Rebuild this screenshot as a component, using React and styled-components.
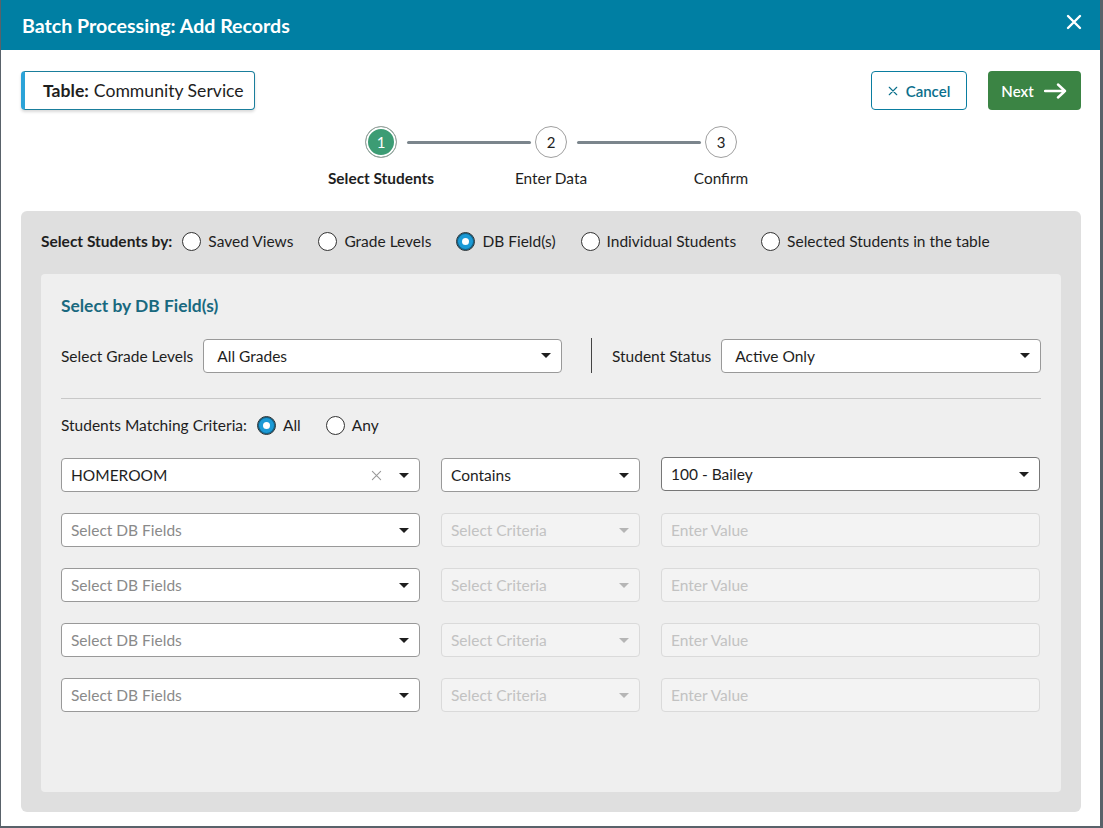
import styled, { createGlobalStyle } from "styled-components";

const GlobalStyle = createGlobalStyle`
  html, body {
    margin: 0;
    padding: 0;
    background: #59626a;
  }
  body {
    font-family: Lato, "Liberation Sans", sans-serif;
    color: #1e1e1e;
  }
  * { box-sizing: border-box; }
`;

const CloseIcon = ({ size = 16, stroke = 2.4 }) => (
  <svg width={size} height={size} viewBox="0 0 16 16" fill="none">
    <path d="M2 2 L14 14 M14 2 L2 14" stroke="currentColor" strokeWidth={stroke} strokeLinecap="round" />
  </svg>
);

const ArrowIcon = () => (
  <svg width="24" height="16" viewBox="0 0 24 16" fill="none">
    <path d="M1 8 H21 M14 1.5 L21 8 L14 14.5" stroke="currentColor" strokeWidth="2.4" strokeLinecap="round" strokeLinejoin="round" />
  </svg>
);

const App = () => {
  const studentOptions = [
    { label: "Saved Views" },
    { label: "Grade Levels" },
    { label: "DB Field(s)", checked: true },
    { label: "Individual Students" },
    { label: "Selected Students in the table" },
  ];
  const emptyRows = [1, 2, 3, 4];

  return (
    <>
      <GlobalStyle />
      <Dialog>
        <Header>
          <Title>Batch Processing: Add Records</Title>
          <HeaderClose>
            <CloseIcon size={16} stroke={2.4} />
          </HeaderClose>
        </Header>
        <Body>
          <TopRow>
            <TableTag>
              <b>Table:</b> Community Service
            </TableTag>
            <Actions>
              <CancelButton>
                <CloseIcon size={10} stroke={1.8} />
                Cancel
              </CancelButton>
              <NextButton>
                Next
                <ArrowIcon />
              </NextButton>
            </Actions>
          </TopRow>

          <Stepper>
            <Step>
              <StepCircle $active>1</StepCircle>
              <StepLabel $active>Select Students</StepLabel>
            </Step>
            <Step>
              <StepCircle>2</StepCircle>
              <StepLabel>Enter Data</StepLabel>
            </Step>
            <Step $last>
              <StepCircle>3</StepCircle>
              <StepLabel>Confirm</StepLabel>
            </Step>
          </Stepper>

          <OuterPanel>
            <RadioRow>
              <BoldLabel>Select Students by:</BoldLabel>
              {studentOptions.map((o) => (
                <RadioItem key={o.label}>
                  <Radio $checked={o.checked} />
                  {o.label}
                </RadioItem>
              ))}
            </RadioRow>

            <InnerPanel>
              <SectionTitle>Select by DB Field(s)</SectionTitle>
              <FilterRow>
                <FieldLabel>Select Grade Levels</FieldLabel>
                <Select $width={359}>
                  <span>All Grades</span>
                  <Caret />
                </Select>
                <Divider />
                <FieldLabel>Student Status</FieldLabel>
                <Select $width={320}>
                  <span>Active Only</span>
                  <Caret />
                </Select>
              </FilterRow>
              <Rule />
              <MatchRow>
                <FieldLabel>Students Matching Criteria:</FieldLabel>
                <RadioItem>
                  <Radio $checked />
                  All
                </RadioItem>
                <RadioItem>
                  <Radio />
                  Any
                </RadioItem>
              </MatchRow>

              <CriteriaGrid>
                <Select>
                  <span>HOMEROOM</span>
                  <SelectIcons>
                    <ClearMark>
                      <CloseIcon size={11} stroke={1.6} />
                    </ClearMark>
                    <Caret />
                  </SelectIcons>
                </Select>
                <Select>
                  <span>Contains</span>
                  <Caret />
                </Select>
                <Select $raised>
                  <span>100 - Bailey</span>
                  <Caret />
                </Select>

                {emptyRows.map((r) => (
                  <Row key={r}>
                    <Select $placeholder>
                      <span>Select DB Fields</span>
                      <Caret />
                    </Select>
                    <Select $disabled>
                      <span>Select Criteria</span>
                      <Caret $disabled />
                    </Select>
                    <Select $disabled>
                      <span>Enter Value</span>
                    </Select>
                  </Row>
                ))}
              </CriteriaGrid>
            </InnerPanel>
          </OuterPanel>
        </Body>
      </Dialog>
    </>
  );
};

export default App;

const Dialog = styled.div`
  width: 1099px;
  height: 826px;
  margin-left: 1px;
  background: #fff;
  display: flex;
  flex-direction: column;
`;

const Header = styled.div`
  height: 50px;
  background: #007fa3;
  color: #fff;
  display: flex;
  align-items: center;
  justify-content: space-between;
  padding: 0 18px 0 21px;
`;

const Title = styled.h1`
  margin: 0;
  font-size: 19.6px;
  font-weight: 700;
`;

const HeaderClose = styled.div`
  display: flex;
  color: #fff;
  margin-top: -6px;
`;

const Body = styled.div`
  padding: 21px 19px 0 20px;
`;

const TopRow = styled.div`
  display: flex;
  justify-content: space-between;
  align-items: center;
`;

const TableTag = styled.div`
  height: 39px;
  display: flex;
  align-items: center;
  gap: 5px;
  padding: 0 10px 0 18px;
  border: 1px solid #1a7e9c;
  border-left: 4px solid #2ba3d8;
  border-radius: 4px;
  font-size: 17.6px;
  box-shadow: 0 2px 3px rgba(0, 0, 0, 0.15);
  b { font-weight: 700; }
`;

const Actions = styled.div`
  display: flex;
  gap: 21px;
`;

const CancelButton = styled.button`
  height: 39px;
  width: 96px;
  display: flex;
  align-items: center;
  justify-content: center;
  gap: 8px;
  background: #fff;
  color: #0a6f8c;
  border: 1px solid #0a7da0;
  border-radius: 4px;
  font-family: inherit;
  font-size: 15px;
  font-weight: 600;
`;

const NextButton = styled.button`
  height: 39px;
  width: 93px;
  display: flex;
  align-items: center;
  justify-content: center;
  gap: 10px;
  background: #3b8444;
  color: #fff;
  border: none;
  border-radius: 4px;
  font-family: inherit;
  font-size: 15px;
  font-weight: 600;
  padding-left: 6px;
`;

const Stepper = styled.div`
  display: flex;
  justify-content: center;
  margin-top: 16px;
`;

const Step = styled.div`
  position: relative;
  width: 170px;
  display: flex;
  flex-direction: column;
  align-items: center;
  &::after {
    content: "";
    display: ${(p) => (p.$last ? "none" : "block")};
    position: absolute;
    top: 15px;
    left: calc(50% + 26px);
    width: 124px;
    height: 3px;
    background: #7b858c;
    border-radius: 2px;
  }
`;

const StepCircle = styled.div`
  width: 32px;
  height: 32px;
  border-radius: 50%;
  border: 1px solid #a0a0a0;
  display: flex;
  align-items: center;
  justify-content: center;
  font-size: 15px;
  background: ${(p) => (p.$active ? "#3c9c74" : "#fff")};
  color: ${(p) => (p.$active ? "#fff" : "#222")};
  box-shadow: ${(p) => (p.$active ? "inset 0 0 0 2px #fff" : "none")};
`;

const StepLabel = styled.div`
  margin-top: 11px;
  font-size: 15.4px;
  font-weight: ${(p) => (p.$active ? 700 : 400)};
`;

const OuterPanel = styled.div`
  margin-top: 24px;
  height: 601px;
  background: #dfdfdf;
  border-radius: 6px;
  padding: 19px 20px 20px;
`;

const RadioRow = styled.div`
  display: flex;
  align-items: center;
  height: 22px;
  font-size: 15.5px;
  white-space: nowrap;
`;

const BoldLabel = styled.span`
  font-weight: 700;
  margin-right: 10px;
`;

const RadioItem = styled.label`
  display: inline-flex;
  align-items: center;
  gap: 7px;
  margin-right: 25px;
  font-size: 15.5px;
  white-space: nowrap;
`;

const Radio = styled.span`
  width: 19px;
  height: 19px;
  flex-shrink: 0;
  border-radius: 50%;
  border: 1px solid #333;
  background: ${(p) => (p.$checked ? "#1b9ad6" : "#fff")};
  box-shadow: ${(p) => (p.$checked ? "inset 0 0 0 1px #125e80" : "none")};
  display: inline-flex;
  align-items: center;
  justify-content: center;
  &::after {
    content: "";
    display: ${(p) => (p.$checked ? "block" : "none")};
    width: 7px;
    height: 7px;
    border-radius: 50%;
    background: #fff;
  }
`;

const InnerPanel = styled.div`
  margin-top: 22px;
  height: 518px;
  background: #efefef;
  border-radius: 4px;
  padding: 21px 20px;
`;

const SectionTitle = styled.h2`
  margin: 0;
  height: 22px;
  font-size: 17.4px;
  font-weight: 700;
  color: #19697f;
`;

const FilterRow = styled.div`
  display: flex;
  align-items: center;
  margin-top: 21px;
`;

const FieldLabel = styled.span`
  font-size: 15.5px;
  margin-right: 10px;
  white-space: nowrap;
  flex-shrink: 0;
`;

const Divider = styled.div`
  width: 1px;
  height: 35px;
  flex-shrink: 0;
  background: #444;
  margin: 0 20px 0 29px;
`;

const Rule = styled.div`
  height: 1px;
  background: #c8c8c8;
  margin-top: 25px;
`;

const MatchRow = styled.div`
  display: flex;
  align-items: center;
  height: 22px;
  margin-top: 15px;
`;

const CriteriaGrid = styled.div`
  margin-top: 22px;
  display: grid;
  grid-template-columns: 359px 199px 379px;
  column-gap: 21px;
  row-gap: 21px;
`;

const Row = styled.div`
  display: contents;
`;

const Select = styled.div`
  height: 34px;
  width: ${(p) => (p.$width ? `${p.$width}px` : "auto")};
  min-width: 0;
  display: flex;
  align-items: center;
  justify-content: space-between;
  padding: 0 10px 0 ${(p) => (p.$width ? 13 : 9)}px;
  margin-top: ${(p) => (p.$raised ? "-1px" : "0")};
  margin-bottom: ${(p) => (p.$raised ? "1px" : "0")};
  border-radius: 4px;
  font-size: 15.5px;
  background: ${(p) => (p.$disabled ? "#f3f3f3" : "#fff")};
  border: 1px solid ${(p) => (p.$disabled ? "#dadada" : p.$raised ? "#777" : "#999")};
  color: ${(p) => (p.$disabled ? "#c2c2c2" : p.$placeholder ? "#8a8a8a" : "#1e1e1e")};
  span { white-space: nowrap; }
`;

const SelectIcons = styled.div`
  display: flex;
  align-items: center;
  gap: 17px;
`;

const ClearMark = styled.span`
  display: flex;
  color: #9a9a9a;
`;

const Caret = styled.i`
  width: 0;
  height: 0;
  border-left: 5px solid transparent;
  border-right: 5px solid transparent;
  border-top: 5px solid ${(p) => (p.$disabled ? "#b5b5b5" : "#1e1e1e")};
`;
